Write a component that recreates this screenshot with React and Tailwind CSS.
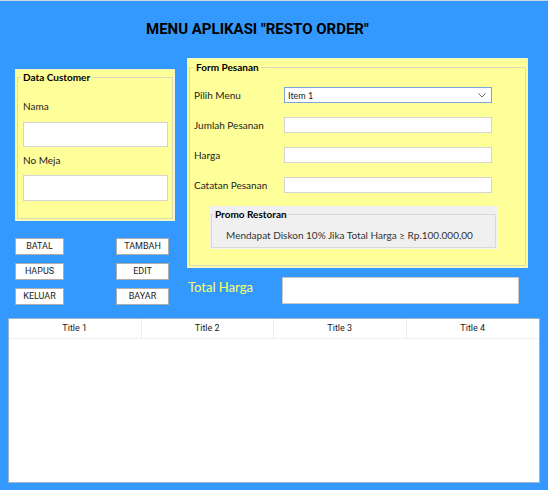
import React from "react";

const font = { fontFamily: 'Lato, "Noto Sans", sans-serif' };
const compact = { fontFamily: 'Roboto, "Liberation Sans", sans-serif' };

function Field({ label, select }) {
    return (
        <div className="flex items-center h-[30px]">
            <span className="w-[90px] text-[10px] text-[#222] whitespace-nowrap">{label}</span>
            {select ? (
                <div className="w-[208px] h-[16px] bg-white border border-[#7aa7d9] flex items-center justify-between px-[3px]">
                    <span className="text-[9px] text-[#222] leading-none">Item 1</span>
                    <svg width="8" height="5" viewBox="0 0 8 5" className="mr-[2px]">
                        <path d="M0.5 0.5 L4 4 L7.5 0.5" fill="none" stroke="#666" strokeWidth="1" />
                    </svg>
                </div>
            ) : (
                <div className="w-[208px] h-[16px] bg-white border border-[#d4d4d4]" />
            )}
        </div>
    );
}

function Btn({ children, wide }) {
    return (
        <button
            style={compact}
            className={`${wide ? "w-[53px]" : "w-[49px]"} h-[17px] bg-white border border-[#adadad] text-[9px] text-[#222] leading-none flex items-center justify-center`}
        >
            {children}
        </button>
    );
}

export default function App() {
    const titles = ["Title 1", "Title 2", "Title 3", "Title 4"];
    return (
        <div style={font} className="w-[548px] h-[490px] bg-[#3399ff] border-t border-[#c9d7e6] overflow-hidden">
            {/* judul */}
            <div className="h-[57px] flex items-center pl-[146px]">
                <h1 style={compact} className="text-[15px] font-bold text-black leading-none">MENU APLIKASI "RESTO ORDER"</h1>
            </div>

            <div className="flex pl-[15px]">
                {/* kiri: data customer + tombol */}
                <div className="w-[160px] mt-[11px]">
                    <div className="h-[152px] bg-[#ffff99] border border-[#f2f2c4] p-[1px]">
                        <fieldset className="h-full border border-[#d9d9bf] pl-[5px] pr-[4px]">
                            <legend className="text-[10px] font-bold text-black px-[2px] -ml-[2px] leading-[12px]">Data Customer</legend>
                            <div className="text-[10px] text-[#222] mt-[17px] leading-[12px]">Nama</div>
                            <div className="h-[25px] bg-white border border-[#d4d4d4] mt-[10px]" />
                            <div className="text-[10px] text-[#222] mt-[7px] leading-[12px]">No Meja</div>
                            <div className="h-[26px] bg-white border border-[#d4d4d4] mt-[9px]" />
                        </fieldset>
                    </div>

                    <div className="grid grid-cols-[49px_53px] gap-x-[52px] gap-y-[8px] mt-[17px]">
                        <Btn>BATAL</Btn>
                        <Btn wide>TAMBAH</Btn>
                        <Btn>HAPUS</Btn>
                        <Btn wide>EDIT</Btn>
                        <Btn>KELUAR</Btn>
                        <Btn wide>BAYAR</Btn>
                    </div>
                </div>

                {/* kanan: form pesanan */}
                <div className="ml-[12px] w-[341px]">
                    <div className="h-[210px] bg-[#ffff99] border border-[#f2f2c4] p-[1px]">
                        <fieldset className="h-full border border-[#d9d9bf] pl-[4px]">
                            <legend className="text-[10px] font-bold text-black px-[2px] leading-[14px]">Form Pesanan</legend>
                            <div className="mt-[6px]">
                                <Field label="Pilih Menu" select />
                                <Field label="Jumlah Pesanan" />
                                <Field label="Harga" />
                                <Field label="Catatan Pesanan" />
                            </div>
                            <div className="ml-[16px] mt-[6px] w-[287px] h-[43px] bg-[#f0f0f0] p-[1px]">
                                <fieldset className="h-[40px] mt-[1px] border border-[#d8d8d8] pl-[2px]">
                                    <legend className="text-[10px] font-bold text-black px-[1px] leading-[12px]">Promo Restoran</legend>
                                    <div className="text-[10px] text-[#333] pl-[12px] mt-[9px] leading-[12px] whitespace-nowrap">
                                        Mendapat Diskon 10% Jika Total Harga ≥ Rp.100.000,00
                                    </div>
                                </fieldset>
                            </div>
                        </fieldset>
                    </div>

                    <div className="flex items-center mt-[9px]">
                        <span className="w-[95px] text-[13px] text-[#ffff66] pl-[1px] mb-[6px]">Total Harga</span>
                        <div className="w-[237px] h-[27px] bg-white border border-[#c8c8c8]" />
                    </div>
                </div>
            </div>

            {/* tabel pesanan */}
            <div className="ml-[8px] mt-[13px] w-[532px] h-[165px] bg-white border border-[#9fb3cc]">
                <div className="grid grid-cols-4 h-[20px] border-b border-[#f0f0f0]">
                    {titles.map((t, i) => (
                        <div
                            key={i}
                            style={compact}
                            className={`flex items-center justify-center text-[9px] text-[#222] ${i < 3 ? "border-r border-[#ececec]" : ""}`}
                        >
                            {t}
                        </div>
                    ))}
                </div>
            </div>
        </div>
    );
}
